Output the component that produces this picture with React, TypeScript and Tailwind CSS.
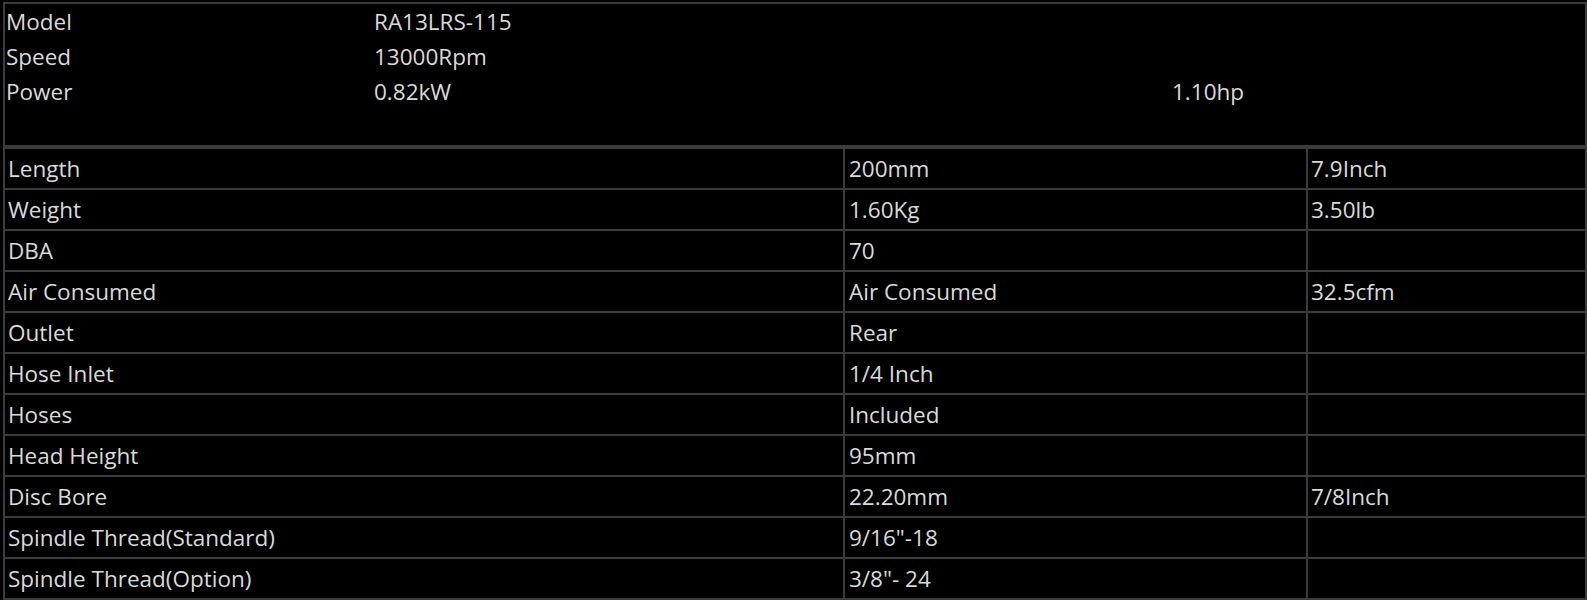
const topRows: [string, string, string][] = [
  ['Model', 'RA13LRS-115', ''],
  ['Speed', '13000Rpm', ''],
  ['Power', '0.82kW', '1.10hp'],
  ['', '', ''],
];

const specRows: [string, string, string][] = [
  ['Length', '200mm', '7.9Inch'],
  ['Weight', '1.60Kg', '3.50lb'],
  ['DBA', '70', ''],
  ['Air Consumed', 'Air Consumed', '32.5cfm'],
  ['Outlet', 'Rear', ''],
  ['Hose Inlet', '1/4 Inch', ''],
  ['Hoses', 'Included', ''],
  ['Head Height', '95mm', ''],
  ['Disc Bore', '22.20mm', '7/8Inch'],
  ['Spindle Thread(Standard)', '9/16"-18', ''],
  ['Spindle Thread(Option)', '3/8"- 24', ''],
];

const App = () => {
  return (
    <div
      className="min-h-[600px] bg-black pl-[3px] pt-[2px] text-[22.5px] text-[#dadada]"
      style={{ fontFamily: '"Open Sans", "Noto Sans", sans-serif' }}
    >
      <div className="w-[1584px] border-t-2 border-l-2 border-r-2 border-[#3c3c3c]">
        <div className="grid grid-cols-[368px_798px_1fr] pl-[1px] pb-[1px] leading-[35px]">
          {topRows.map((row, i) => (
            <div key={i} className="contents">
              <div className="h-[35px] whitespace-nowrap">{row[0]}</div>
              <div className="h-[35px] whitespace-nowrap">{row[1]}</div>
              <div className="h-[35px] whitespace-nowrap">{row[2]}</div>
            </div>
          ))}
        </div>
        <div className="grid grid-cols-[838px_461px_1fr] gap-[2px] border-y-2 border-t-4 border-[#3c3c3c] bg-[#3c3c3c] leading-[39px]">
          {specRows.map((row, i) => (
            <div key={i} className="contents">
              <div className="h-[39px] bg-black pl-[3px] whitespace-nowrap">{row[0]}</div>
              <div className="h-[39px] bg-black pl-[4px] whitespace-nowrap">{row[1]}</div>
              <div className="h-[39px] bg-black pl-[3px] whitespace-nowrap">{row[2]}</div>
            </div>
          ))}
        </div>
      </div>
    </div>
  );
};

export default App;
